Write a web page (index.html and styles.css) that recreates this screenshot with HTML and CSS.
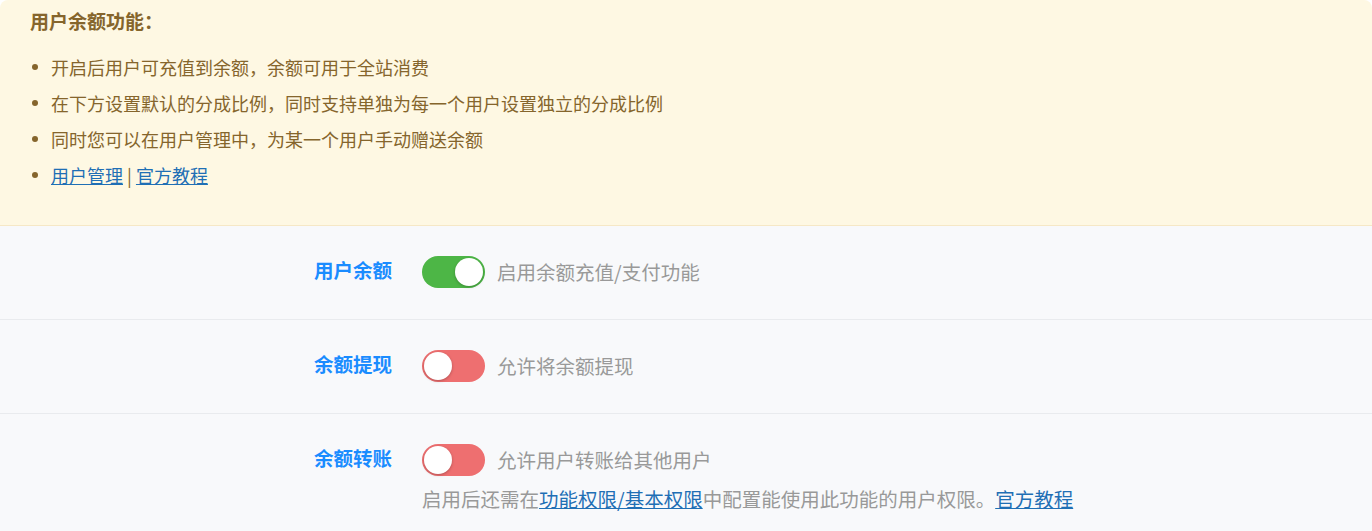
FILE: index.html
```html
<!DOCTYPE html>
<html lang="zh-CN">
<head>
<meta charset="utf-8">
<title>用户余额</title>
<link rel="stylesheet" href="styles.css">
</head>
<body>
<div class="notice">
  <div class="notice-title">用户余额功能：</div>
  <ul class="notice-list">
    <li>开启后用户可充值到余额，余额可用于全站消费</li>
    <li>在下方设置默认的分成比例，同时支持单独为每一个用户设置独立的分成比例</li>
    <li>同时您可以在用户管理中，为某一个用户手动赠送余额</li>
    <li><a href="#">用户管理</a> | <a href="#">官方教程</a></li>
  </ul>
</div>
<div class="settings">
  <div class="row">
    <div class="label">用户余额</div>
    <div class="control">
      <div class="line">
        <span class="switch on"><span class="knob"></span></span>
        <span class="desc">启用余额充值/支付功能</span>
      </div>
    </div>
  </div>
  <div class="row">
    <div class="label">余额提现</div>
    <div class="control">
      <div class="line">
        <span class="switch off"><span class="knob"></span></span>
        <span class="desc">允许将余额提现</span>
      </div>
    </div>
  </div>
  <div class="row last">
    <div class="label">余额转账</div>
    <div class="control">
      <div class="line">
        <span class="switch off"><span class="knob"></span></span>
        <span class="desc">允许用户转账给其他用户</span>
      </div>
      <div class="hint">启用后还需在<a href="#">功能权限/基本权限</a>中配置能使用此功能的用户权限。<a href="#">官方教程</a></div>
    </div>
  </div>
</div>
</body>
</html>
```
FILE: styles.css
```css
* { box-sizing: border-box; }
html, body {
  margin: 0;
  padding: 0;
  background: #ffffff;
  font-family: "Noto Sans CJK SC", "Noto Sans", sans-serif;
}
a { color: #1f6fb5; text-decoration: underline; }

.notice {
  background: #fef8e3;
  border-bottom: 1px solid #f6e8c6;
  border-radius: 8px 8px 0 0;
  padding: 7px 30px 20px 30px;
  color: #85652c;
  height: 226px;
}
.notice-title {
  font-size: 19px;
  font-weight: bold;
  line-height: 28px;
}
.notice-list {
  list-style: none;
  margin: 14px 0 0 0;
  padding: 0;
}
.notice-list li {
  display: flex;
  align-items: center;
  font-size: 18px;
  line-height: 36px;
  height: 36px;
  white-space: pre;
}
.notice-list li::before {
  content: "";
  width: 6px;
  height: 6px;
  border-radius: 50%;
  background: #85652c;
  margin: 0 13px 0 2px;
  flex: none;
}

.settings {
  background: #f8f9fb;
}
.row {
  display: grid;
  grid-template-columns: 392px 1fr;
  column-gap: 30px;
  padding: 30px 0 30px 0;
  border-bottom: 1px solid #e9ebee;
  height: 94px;
}
.row.last {
  border-bottom: none;
  height: 117px;
}
.label {
  text-align: right;
  color: #1a8cff;
  font-weight: bold;
  font-size: 19.5px;
  line-height: 28px;
}
.control { display: flex; flex-direction: column; }
.line {
  display: flex;
  align-items: center;
  height: 32px;
}
.switch {
  position: relative;
  width: 63px;
  height: 32px;
  border-radius: 16px;
  flex: none;
  margin-right: 12px;
}
.switch.on { background: #4db646; }
.switch.off { background: #ee6f70; }
.knob {
  position: absolute;
  top: 2px;
  width: 28px;
  height: 28px;
  border-radius: 50%;
  background: #ffffff;
  box-shadow: 0 1px 3px rgba(0,0,0,0.25);
}
.switch.on .knob { right: 2px; }
.switch.off .knob { left: 2px; }
.desc {
  color: #999999;
  font-size: 19.5px;
  line-height: 32px;
}
.hint {
  margin-top: 10px;
  color: #999999;
  font-size: 19.5px;
  line-height: 26px;
}
.hint a { color: #1f6fb5; }
```
